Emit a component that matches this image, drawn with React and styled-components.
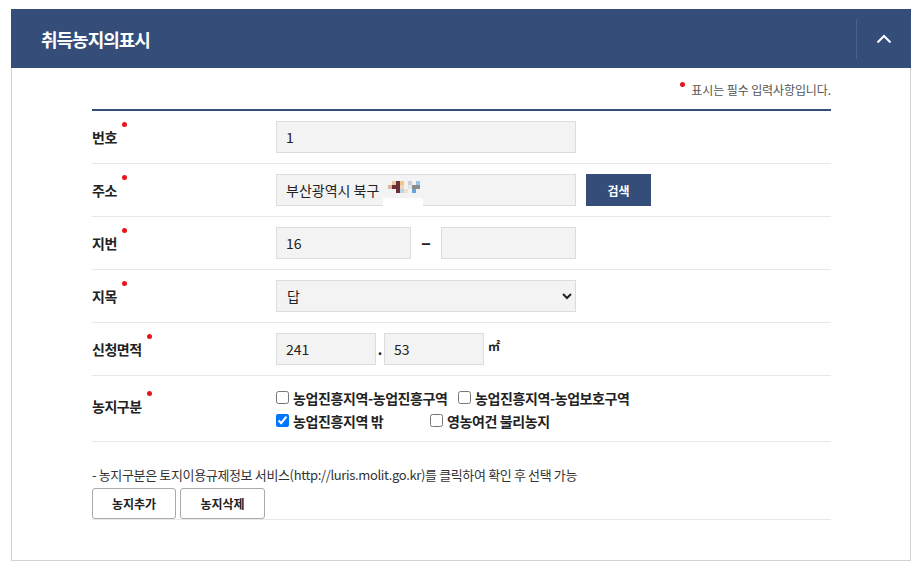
import styled, { createGlobalStyle } from "styled-components";

const GlobalStyle = createGlobalStyle`
  body {
    margin: 0;
    background: #fff;
    font-family: "Noto Sans CJK KR", "Noto Sans", sans-serif;
    color: #222;
  }
`;

const Page = styled.div`
  padding: 9px 10px 0 11px;
`;

const Panel = styled.section`
  width: 900px;
  height: 552px;
  box-sizing: border-box;
  border: 1px solid #d3d3d3;
  border-top: none;
  display: flex;
  flex-direction: column;
`;

const PanelHeader = styled.header`
  height: 59px;
  margin: 0 -1px;
  background: #344d79;
  display: flex;
  align-items: center;
  justify-content: space-between;
  padding-left: 30px;
`;

const Title = styled.h2`
  margin: 0;
  font-size: 18px;
  font-weight: 700;
  color: #fff;
  letter-spacing: -1px;
`;

const ToggleButton = styled.button`
  width: 55px;
  height: 40px;
  border: none;
  border-left: 1px solid #4a6290;
  background: transparent;
  display: flex;
  align-items: center;
  justify-content: center;
  padding: 0;
  cursor: pointer;
`;

const Body = styled.div`
  padding: 0 79px 0 80px;
`;

const Notice = styled.p`
  margin: 0;
  height: 41px;
  display: flex;
  align-items: center;
  justify-content: flex-end;
  padding-top: 2px;
  box-sizing: border-box;
  font-size: 12px;
  color: #555;
  letter-spacing: -0.1px;
`;

const Dot = styled.span`
  display: inline-block;
  width: 5px;
  height: 5px;
  border-radius: 50%;
  background: #e8141a;
  position: relative;
  top: ${(p) => p.$top ?? -16}px;
  margin-left: ${(p) => p.$gap ?? 5}px;
  margin-right: ${(p) => p.$after ?? 0}px;
`;

const Table = styled.div`
  border-top: 2px solid #344d79;
`;

const Row = styled.div`
  display: grid;
  grid-template-columns: 184px 1fr;
  align-items: center;
  min-height: ${(p) => p.$h ?? 52}px;
  border-bottom: 1px solid #e8e8e8;
`;

const Label = styled.div`
  font-size: 14px;
  font-weight: 700;
  color: #222;
  letter-spacing: -0.5px;
  align-self: ${(p) => (p.$top ? "start" : "center")};
  padding-top: ${(p) => (p.$top ? "20px" : "0")};
`;

const Field = styled.div`
  display: flex;
  align-items: center;
  gap: ${(p) => p.$gap ?? 10}px;
`;

const Input = styled.input`
  width: ${(p) => p.$w ?? 300}px;
  height: 32px;
  box-sizing: border-box;
  border: 1px solid #dcdcdc;
  background: #f3f3f3;
  padding: 0 9px;
  font-family: "Noto Sans CJK KR", "Noto Sans", sans-serif;
  font-size: 14px;
  color: #222;
  outline: none;
`;

const AddressBox = styled.div`
  width: 300px;
  height: 32px;
  box-sizing: border-box;
  border: 1px solid #dcdcdc;
  background: #f3f3f3;
  padding: 0 9px;
  display: flex;
  align-items: center;
  gap: 9px;
  font-size: 14px;
  color: #222;
  position: relative;
`;

const Masked = styled.span`
  position: absolute;
  left: 106px;
  top: 23px;
  width: 40px;
  height: 10px;
  background: #fff;
`;

const Select = styled.select`
  width: 300px;
  height: 32px;
  border: 1px solid #dcdcdc;
  background: #f3f3f3;
  padding: 0 6px;
  font-family: "Noto Sans CJK KR", "Noto Sans", sans-serif;
  font-size: 14px;
  color: #222;
  outline: none;
`;

const PrimaryButton = styled.button`
  width: 65px;
  height: 32px;
  border: none;
  background: #344d79;
  color: #fff;
  font-family: inherit;
  font-size: 12px;
  font-weight: 700;
`;

const Sep = styled.span`
  font-size: ${(p) => p.$size ?? 14}px;
  font-weight: 700;
  color: #222;
  width: ${(p) => p.$w ?? "auto"};
  text-align: center;
`;

const Unit = styled.span`
  font-size: 12px;
  font-weight: 700;
  margin-left: 4px;
  margin-top: -8px;
`;

const CheckGrid = styled.div`
  display: grid;
  grid-template-columns: 182px auto;
  row-gap: 3px;
  padding: 10px 0 9px;
`;

const Check = styled.label`
  display: flex;
  align-items: center;
  gap: 2px;
  font-size: 14px;
  font-weight: 700;
  letter-spacing: -0.4px;
  white-space: nowrap;
  margin-left: ${(p) => p.$shift ?? 0}px;

  input {
    margin: 0 2px 0 0;
    width: 13px;
    height: 13px;
  }
`;

const Footer = styled.div`
  padding-top: 23px;
  border-bottom: 1px solid #e8e8e8;
`;

const Hint = styled.p`
  margin: 0 0 4px;
  font-size: 13px;
  color: #333;
  letter-spacing: -0.35px;
`;

const ButtonBar = styled.div`
  display: flex;
  gap: 4px;
`;

const OutlineButton = styled.button`
  width: ${(p) => p.$w ?? 84}px;
  height: 31px;
  border: 1px solid #aaa;
  border-radius: 3px;
  background: #fff;
  font-family: inherit;
  font-size: 12px;
  font-weight: 700;
  color: #222;
`;

// pixelated (masked) part of the address
const MOSAIC = [
  [null, "#ecc9a4", "#6b2f3a", "#f0c88e", null, "#cfcfcf", null, "#9cc3e6", null],
  ["#d8b49c", "#6b2f3a", "#6b2f3a", "#efd6b8", null, "#e4e4e4", "#8a8a8a", "#8a8a8a", null],
  [null, null, "#6b2f3a", "#b9d5ec", "#f4e2c6", null, "#6aa3d6", null, null],
];

function Mosaic() {
  return (
    <svg width="36" height="12" viewBox="0 0 36 12" style={{ marginTop: -7 }}>
      {MOSAIC.map((row, y) =>
        row.map((c, x) =>
          c ? <rect key={`${x}-${y}`} x={x * 4} y={y * 4} width="4" height="4" fill={c} /> : null
        )
      )}
    </svg>
  );
}

export default function App() {
  return (
    <Page>
      <GlobalStyle />
      <Panel>
        <PanelHeader>
          <Title>취득농지의표시</Title>
          <ToggleButton aria-label="접기">
            <svg width="16" height="10" viewBox="0 0 16 10">
              <path d="M1.5 8.5 L8 2 L14.5 8.5" fill="none" stroke="#fff" strokeWidth="2" />
            </svg>
          </ToggleButton>
        </PanelHeader>
        <Body>
          <Notice>
            <Dot $top={-5} $gap={0} $after={6} />
            표시는 필수 입력사항입니다.
          </Notice>
          <Table>
            <Row>
              <Label>번호<Dot /></Label>
              <Field>
                <Input defaultValue="1" />
              </Field>
            </Row>
            <Row>
              <Label>주소<Dot /></Label>
              <Field>
                <AddressBox>
                  부산광역시 북구
                  <Mosaic />
                  <Masked />
                </AddressBox>
                <PrimaryButton>검색</PrimaryButton>
              </Field>
            </Row>
            <Row>
              <Label>지번<Dot /></Label>
              <Field $gap={0}>
                <Input $w={135} defaultValue="16" />
                <Sep $size={16} $w="30px">−</Sep>
                <Input $w={135} />
              </Field>
            </Row>
            <Row>
              <Label>지목<Dot /></Label>
              <Field>
                <Select defaultValue="답">
                  <option>전</option>
                  <option>답</option>
                  <option>과수원</option>
                </Select>
              </Field>
            </Row>
            <Row>
              <Label>신청면적<Dot /></Label>
              <Field $gap={0}>
                <Input $w={100} defaultValue="241" />
                <Sep $w="8px">.</Sep>
                <Input $w={100} defaultValue="53" />
                <Unit>㎡</Unit>
              </Field>
            </Row>
            <Row $h={65}>
              <Label $top>농지구분<Dot /></Label>
              <CheckGrid>
                <Check><input type="checkbox" />농업진흥지역-농업진흥구역</Check>
                <Check><input type="checkbox" />농업진흥지역-농업보호구역</Check>
                <Check><input type="checkbox" defaultChecked />농업진흥지역 밖</Check>
                <Check $shift={-28}><input type="checkbox" />영농여건 불리농지</Check>
              </CheckGrid>
            </Row>
          </Table>
          <Footer>
            <Hint>- 농지구분은 토지이용규제정보 서비스(http://luris.molit.go.kr)를 클릭하여 확인 후 선택 가능</Hint>
            <ButtonBar>
              <OutlineButton>농지추가</OutlineButton>
              <OutlineButton $w={85}>농지삭제</OutlineButton>
            </ButtonBar>
          </Footer>
        </Body>
      </Panel>
    </Page>
  );
}
